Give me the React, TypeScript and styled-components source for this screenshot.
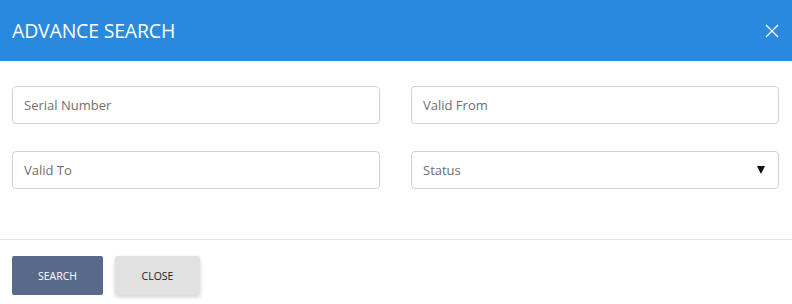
import * as React from 'react'
import styled, { createGlobalStyle } from 'styled-components';

const GlobalStyle = createGlobalStyle`
    html, body {
        margin: 0;
        padding: 0;
        background: #fff;
        font-family: "Open Sans", "Noto Sans", sans-serif;
    }
    * { box-sizing: border-box; }
`;

export const Modal = styled.div`
    width: 792px;
    height: 304px;
    background: #fff;
    display: flex;
    flex-direction: column;
`;

export const Header = styled.div`
    display: flex;
    align-items: center;
    justify-content: space-between;
    height: 61px;
    padding: 0 12px 0 12px;
    background: #2889dd;
`;

export const Title = styled.h2`
    margin: 0;
    color: #fff;
    font-size: 19.5px;
    font-weight: 400;
    letter-spacing: -0.2px;
`;

export const CloseIcon = styled.button`
    display: flex;
    align-items: center;
    justify-content: center;
    width: 16px;
    height: 16px;
    padding: 0;
    border: none;
    background: none;
    cursor: pointer;
`;

export const Body = styled.div`
    display: grid;
    grid-template-columns: 368px 368px;
    grid-auto-rows: 38px;
    align-content: start;
    column-gap: 31px;
    row-gap: 27px;
    padding: 25px 12px 0 12px;
    height: 179px;
    border-bottom: 1px solid #e3e3e3;
`;

export const Field = styled.div`
    position: relative;
    height: 38px;
`;

export const Input = styled.input`
    width: 100%;
    height: 38px;
    padding: 0 11px;
    border: 1px solid #cfd3d9;
    border-radius: 4px;
    font-family: inherit;
    font-size: 13px;
    color: #333;
    background: #fff;
    outline: none;
    &::placeholder {
        color: #6f6f6f;
    }
`;

export const Select = styled.select`
    width: 100%;
    height: 38px;
    padding: 0 11px;
    border: 1px solid #cfd3d9;
    border-radius: 4px;
    font-family: inherit;
    font-size: 13px;
    color: #6f6f6f;
    background: #fff;
    appearance: none;
    outline: none;
`;

export const Arrow = styled.span`
    position: absolute;
    right: 14px;
    top: 15px;
    width: 0;
    height: 0;
    border-left: 4.5px solid transparent;
    border-right: 4.5px solid transparent;
    border-top: 8px solid #111;
    pointer-events: none;
`;

export const Footer = styled.div`
    display: flex;
    gap: 12px;
    padding: 16px 12px 0 12px;
`;

export const Button = styled.button<{ $primary?: boolean }>`
    height: 39px;
    width: ${p => (p.$primary ? '91px' : '85px')};
    border: none;
    border-radius: 2px;
    font-family: inherit;
    font-size: 10.5px;
    background: ${p => (p.$primary ? '#586a89' : '#e1e1e1')};
    color: ${p => (p.$primary ? '#fff' : '#222')};
    box-shadow: ${p => (p.$primary ? 'none' : '0 2px 4px rgba(0,0,0,0.18)')};
    cursor: pointer;
`;

export default function App() {
    return (
        <>
            <GlobalStyle />
            <Modal>
                <Header>
                    <Title>ADVANCE SEARCH</Title>
                    <CloseIcon aria-label="close">
                        <svg width="14" height="14" viewBox="0 0 14 14">
                            <path d="M1 1 L13 13 M13 1 L1 13" stroke="#fff" strokeWidth="1.3" />
                        </svg>
                    </CloseIcon>
                </Header>
                <Body>
                    <Field><Input placeholder="Serial Number" /></Field>
                    <Field><Input placeholder="Valid From" /></Field>
                    <Field><Input placeholder="Valid To" /></Field>
                    <Field>
                        <Select defaultValue="">
                            <option value="">Status</option>
                        </Select>
                        <Arrow />
                    </Field>
                </Body>
                <Footer>
                    <Button $primary>SEARCH</Button>
                    <Button>CLOSE</Button>
                </Footer>
            </Modal>
        </>
    )
}
